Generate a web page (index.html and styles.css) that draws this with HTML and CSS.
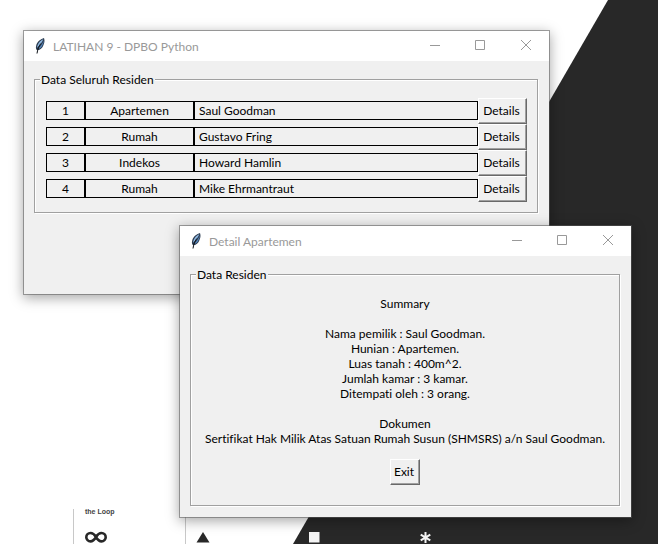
FILE: index.html
```
<!DOCTYPE html>
<html lang="id">
<head>
<meta charset="utf-8">
<title>LATIHAN 9 - DPBO Python</title>
<link rel="stylesheet" href="styles.css">
</head>
<body>
<svg width="0" height="0" class="defs" aria-hidden="true">
  <symbol id="feather" viewBox="0 0 16 16">
    <path d="M12 0C9 .8 5.200 3.600 4.200 7.500c-.4 1.500-.4 2.800 0 3.900l1.800.8c2-.5 4.200-2 5.200-4.500C12.400 5.300 13 2.500 12 0z" fill="#2c3c50"/>
    <path d="M11.300 1.200C8.400 2.600 5.500 5.200 5 9.800 7.600 7.200 9.800 4.800 11.300 1.200z" fill="#8fb8e2"/>
    <path d="M11.700 2.500C10.500 5.900 8.500 8.300 6 11.200c2-.6 3.800-2 4.500-4.200.7-1.300 1.200-2.500 1.200-4.500z" fill="#5688c0"/>
    <path d="M8.800 5.500C7.400 7.500 5.600 10.500 5 15.500" fill="none" stroke="#0c1016" stroke-width="1"/>
  </symbol>
  <symbol id="minimize" viewBox="0 0 12 12"><path d="M2 5.500h10" stroke="#999" fill="none"/></symbol>
  <symbol id="maximize" viewBox="0 0 12 12"><path d="M1.500 .5h9v9h-9z" stroke="#999" fill="none"/></symbol>
  <symbol id="close" viewBox="0 0 12 12"><path d="M1 0l10 10M11 0L1 10" stroke="#999" fill="none"/></symbol>
</svg>

<div class="desktop">
  <svg class="wallpaper" viewBox="0 0 658 544" preserveAspectRatio="xMinYMin slice" aria-hidden="true">
    <path d="M608 0h50v544H293z" fill="#282828"/>
    <path d="M73.500 509v35M185.500 509v35" stroke="#c8c8c8" fill="none"/>
    <text x="85" y="514" class="caption">the Loop</text>
    <path d="M96 537c-1.500-2.500-3.500-4-5.500-4a4.200 4.200 0 0 0 0 8.400c2 0 4-1.900 5.500-4.400s3.500-4 5.500-4a4.200 4.200 0 0 1 0 8.400c-2 0-4-1.900-5.500-4.400z" fill="none" stroke="#282828" stroke-width="2.600"/>
    <path d="M203 532l6.500 10.500h-13z" fill="#282828"/>
    <path d="M309 532h10.500v10.500H309z" fill="#f4f4f4"/>
    <path d="M425.500 532v11M420.700 534.700l9.600 5.600M430.300 534.700l-9.600 5.600" stroke="#f4f4f4" stroke-width="2"/>
  </svg>

  <main class="window list-window">
    <header class="titlebar">
      <svg class="app-icon"><use href="#feather"/></svg>
      <h1 class="title">LATIHAN 9 - DPBO Python</h1>
      <button class="caption-button" aria-label="Minimize"><svg><use href="#minimize"/></svg></button>
      <button class="caption-button" aria-label="Maximize"><svg><use href="#maximize"/></svg></button>
      <button class="caption-button" aria-label="Close"><svg><use href="#close"/></svg></button>
    </header>
    <div class="client">
      <fieldset class="group residents">
        <legend>Data Seluruh Residen</legend>
        <table class="resident-table">
          <colgroup><col class="col-number"><col class="col-type"><col><col class="col-action"></colgroup>
          <tr><td><div class="cell">1</div></td><td><div class="cell">Apartemen</div></td><td><div class="cell name">Saul Goodman</div></td><td><button class="button">Details</button></td></tr>
          <tr><td><div class="cell">2</div></td><td><div class="cell">Rumah</div></td><td><div class="cell name">Gustavo Fring</div></td><td><button class="button">Details</button></td></tr>
          <tr><td><div class="cell">3</div></td><td><div class="cell">Indekos</div></td><td><div class="cell name">Howard Hamlin</div></td><td><button class="button">Details</button></td></tr>
          <tr><td><div class="cell">4</div></td><td><div class="cell">Rumah</div></td><td><div class="cell name">Mike Ehrmantraut</div></td><td><button class="button">Details</button></td></tr>
        </table>
      </fieldset>
    </div>
  </main>

  <section class="window detail-window">
    <header class="titlebar">
      <svg class="app-icon"><use href="#feather"/></svg>
      <h2 class="title">Detail Apartemen</h2>
      <button class="caption-button" aria-label="Minimize"><svg><use href="#minimize"/></svg></button>
      <button class="caption-button" aria-label="Maximize"><svg><use href="#maximize"/></svg></button>
      <button class="caption-button" aria-label="Close"><svg><use href="#close"/></svg></button>
    </header>
    <div class="client">
      <fieldset class="group detail">
        <legend>Data Residen</legend>
        <p>Summary</p>
        <p>Nama pemilik : Saul Goodman.<br>Hunian : Apartemen.<br>Luas tanah : 400m^2.<br>Jumlah kamar : 3 kamar.<br>Ditempati oleh : 3 orang.</p>
        <p>Dokumen<br>Sertifikat Hak Milik Atas Satuan Rumah Susun (SHMSRS) a/n Saul Goodman.</p>
        <button class="button exit">Exit</button>
      </fieldset>
    </div>
  </section>
</div>
</body>
</html>
```
FILE: styles.css
```
* { box-sizing: border-box; }

body {
  margin: 0;
  font: 12px/15px Lato, "Open Sans", sans-serif;
  font-variant-ligatures: none;
  color: #000;
}

.defs { position: absolute; }

.desktop {
  position: relative;
  min-height: 100vh;
  overflow: hidden;
  background: #fff;
}

.wallpaper {
  position: absolute;
  inset: 0;
  width: 100%;
  height: 100%;
}

.caption {
  font: bold 7px "Liberation Sans", sans-serif;
  fill: #444;
}

.window {
  position: absolute;
  border: 1px solid rgba(90, 90, 90, 0.55);
  background: #f0f0f0;
  background-clip: padding-box;
  box-shadow: 0 3px 12px rgba(0, 0, 0, 0.35);
}

.list-window { left: 23px; top: 30px; width: 527px; min-height: 265px; }
.detail-window { left: 179px; top: 225px; width: 453px; min-height: 293px; }

.titlebar {
  display: flex;
  align-items: center;
  height: 30px;
  padding-left: 8px;
  background: #fff;
}

.app-icon { width: 16px; height: 16px; }

.title {
  flex: 1;
  margin: 0 0 0 5px;
  font-size: 12px;
  font-weight: 400;
  color: #999;
}

.caption-button {
  display: grid;
  place-items: center;
  width: 46px;
  height: 30px;
  padding: 0;
  border: 0;
  background: none;
}

.caption-button svg { width: 12px; height: 12px; }

.client { padding: 11px 11px 11px 10px; }

.group {
  min-width: 0;
  margin: 0;
  border: 1px solid #a0a0a0;
  box-shadow: 1px 1px #fff, inset 1px 1px #fff;
}

.group legend {
  margin-left: -6px;
  padding: 0 1px;
  background: #f0f0f0;
}

.residents { padding: 11px 10px 10px 11px; }

.resident-table {
  width: 100%;
  table-layout: fixed;
  border-collapse: collapse;
}

.resident-table td {
  height: 26px;
  padding: 0;
  vertical-align: top;
}

.col-number { width: 39px; }
.col-type { width: 109px; }
.col-action { width: 49px; }

.cell {
  height: 19px;
  margin-top: 3px;
  border: 1px solid #000;
  line-height: 17px;
  text-align: center;
}

.cell.name {
  padding-left: 4px;
  text-align: left;
}

.button {
  display: block;
  width: 100%;
  height: 26px;
  padding: 0 2px 2px 0;
  border: 1px solid;
  border-color: #fff #696969 #696969 #fff;
  box-shadow: inset -1px -1px #a0a0a0;
  background: #f0f0f0;
  color: inherit;
  font: inherit;
}

.detail { padding: 14px 11px 20px; }

.detail p {
  margin: 0 0 15px;
  text-align: center;
  white-space: nowrap;
}

.exit {
  width: 30px;
  margin: -2px auto 0;
}
```
